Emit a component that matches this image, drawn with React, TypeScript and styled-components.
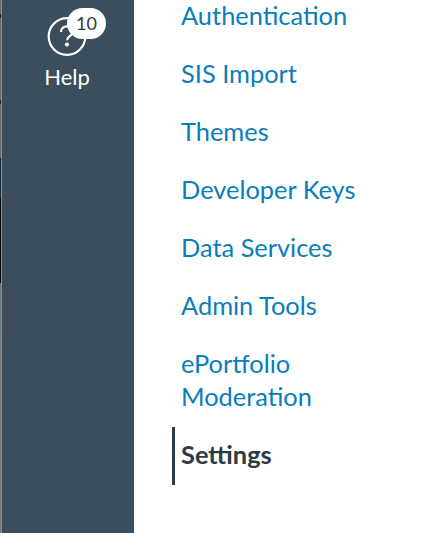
import { createGlobalStyle } from "styled-components";
import styled from "styled-components";

const Global = createGlobalStyle`
  html, body {
    margin: 0;
    height: 100%;
    overflow: hidden;
    background: #fff;
    font-family: Lato, "Open Sans", sans-serif;
  }
  #root {
    height: 100%;
  }
`;

const Page = styled.div`
  display: flex;
  height: 533px;
  overflow: hidden;
`;

const EdgeStrip = styled.div`
  width: 1px;
  flex: none;
  background: linear-gradient(
    to bottom,
    #6d6d6d 0 14px,
    #222 14px 18px,
    #6d6d6d 18px 100px,
    #222 100px 104px,
    #6d6d6d 104px 158px,
    #1c2a36 158px 198px,
    #0a0a0a 198px 283px,
    #6d7777 283px 340px,
    #7a7a7a 340px
  );
`;

const Sidebar = styled.nav`
  width: 133px;
  flex: none;
  box-sizing: border-box;
  background: #3c4e5c;
  border-left: 1px solid #8b8f92;
  display: flex;
  flex-direction: column;
  align-items: center;
  padding: 17px 2px 0 0;
  color: #fff;
`;

const HelpIcon = styled.div`
  position: relative;
  width: 40px;
  height: 39px;
`;

const Badge = styled.span`
  position: absolute;
  top: -9px;
  left: 20px;
  min-width: 39px;
  height: 31px;
  border-radius: 16px;
  background: #fff;
  color: #2d3b45;
  font-size: 18px;
  line-height: 31px;
  text-align: center;
`;

const HelpLabel = styled.span`
  font-size: 22px;
  line-height: 26px;
  margin-top: 8px;
`;

const Menu = styled.ul`
  list-style: none;
  margin: -13.5px 0 0 38px;
  padding: 0;
  flex: 1;
`;

const MenuItem = styled.li<{ $active?: boolean }>`
  box-sizing: border-box;
  width: 200px;
  display: flex;
  align-items: center;
  padding: ${(p) => (p.$active ? "11.5px 0 13.5px 6px" : "12.5px 0 12.5px 6px")};
  margin-top: ${(p) => (p.$active ? "1px" : "0")};
  border-left: 3px solid ${(p) => (p.$active ? "#2d3b45" : "transparent")};
  font-size: 25.4px;
  line-height: 33px;
  font-weight: ${(p) => (p.$active ? 700 : 400)};
  color: ${(p) => (p.$active ? "#2d3b45" : "#0a7dbb")};
  font-variant-ligatures: common-ligatures discretionary-ligatures;
  text-rendering: optimizeLegibility;
`;

const items = [
  "Authentication",
  "SIS Import",
  "Themes",
  "Developer Keys",
  "Data Services",
  "Admin Tools",
  "ePortfolio Moderation",
];

const App = () => {
  return (
    <Page>
      <Global />
      <EdgeStrip />
      <Sidebar>
        <HelpIcon>
          <svg width="40" height="39" viewBox="0 0 40 39" fill="none">
            <circle cx="20" cy="19.5" r="18.3" stroke="#fff" strokeWidth="2.2" />
            <path
              d="M14 15c0-3.4 2.7-5.6 6-5.6s6 2.2 6 5.2c0 4.6-6 4.2-6 8.6"
              stroke="#fff"
              strokeWidth="2.2"
            />
            <circle cx="20" cy="27.5" r="2.1" fill="#fff" />
          </svg>
          <Badge>10</Badge>
        </HelpIcon>
        <HelpLabel>Help</HelpLabel>
      </Sidebar>
      <Menu>
        {items.map((item) => (
          <MenuItem key={item}>{item}</MenuItem>
        ))}
        <MenuItem $active>Settings</MenuItem>
      </Menu>
    </Page>
  );
};

export default App;
